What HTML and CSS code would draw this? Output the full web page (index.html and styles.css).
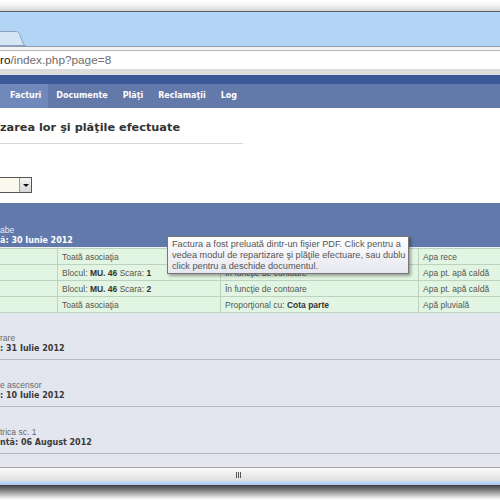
FILE: index.html
```html
<!DOCTYPE html>
<html>
<head>
<meta charset="utf-8">
<link rel="stylesheet" href="styles.css">
</head>
<body>
<div class="window">
  <div class="topshade"></div>
  <div class="titlebar">
    <svg class="tab" width="26" height="15" viewBox="0 0 26 15">
      <path d="M-2 0.5 H16.5 Q18.5 0.5 19.3 2.5 L23.5 13 Q24 14.5 25.5 14.5 L-2 14.5 Z" fill="#d6e5f4" stroke="#8da3bd" stroke-width="1"/>
    </svg>
  </div>
  <div class="addr-wrap">
    <div class="addr"><span class="host">ro</span>/index.php?page=8</div>
  </div>
  <div class="topbar"></div>
  <nav class="nav">
    <a class="navitem active">Facturi</a>
    <a class="navitem">Documente</a>
    <a class="navitem">Plăţi</a>
    <a class="navitem">Reclamaţii</a>
    <a class="navitem">Log</a>
  </nav>
  <main class="content">
    <div class="head"><h1 class="title">zarea lor şi plăţile efectuate</h1></div>
    <div class="selectrow">
      <div class="select"><span class="selbtn"><span class="arrow"></span></span></div>
    </div>
    <section class="invoice">
      <div class="band">
        <div class="band-lbl">abe</div>
        <div class="band-date">ă: 30 Iunie 2012</div>
      </div>
      <table class="split">
        <tr><td class="c1"></td><td class="c2">Toată asociaţia</td><td class="c3">În funcţie de contoare</td><td class="c4">Apa rece</td></tr>
        <tr><td class="c1"></td><td class="c2">Blocul: <b>MU. 46</b> Scara: <b>1</b></td><td class="c3">În funcţie de contoare</td><td class="c4">Apa pt. apă caldă</td></tr>
        <tr><td class="c1"></td><td class="c2">Blocul: <b>MU. 46</b> Scara: <b>2</b></td><td class="c3">În funcţie de contoare</td><td class="c4">Apa pt. apă caldă</td></tr>
        <tr><td class="c1"></td><td class="c2">Toată asociaţia</td><td class="c3">Proporţional cu: <b>Cota parte</b></td><td class="c4">Apă pluvială</td></tr>
      </table>
    </section>
    <div class="item"><div class="item-lbl">rare</div><div class="item-date">: 31 Iulie 2012</div></div>
    <div class="item"><div class="item-lbl">e ascensor</div><div class="item-date">: 10 Iulie 2012</div></div>
    <div class="item"><div class="item-lbl">trica sc. 1</div><div class="item-date">ntă: 06 August 2012</div></div>
    <div class="item"></div>
  </main>
  <div class="status"><span class="grip"></span></div>
  <div class="frame-bottom"></div>
  <div class="shadow"></div>
  <div class="tooltip">Factura a fost preluată dintr-un fişier PDF. Click pentru a<br>vedea modul de repartizare şi plăţile efectuare, sau dublu<br>click pentru a deschide documentul.</div>
</div>
</body>
</html>
```

FILE: styles.css
```css
html, body {
  margin: 0;
  padding: 0;
  width: 500px;
  height: 500px;
  overflow: hidden;
  background: #ffffff;
}

.window {
  position: relative;
  width: 500px;
  height: 500px;
  display: flex;
  flex-direction: column;
  font-family: "Liberation Sans", Arial, sans-serif;
}

.topshade {
  height: 11px;
  border-bottom: 1px solid #5c5f66;
  background: linear-gradient(#ffffff 0%, #f6f6f6 40%, #d4d4d4 100%);
}

.titlebar {
  height: 34px;
  background: #b2d5f6;
  display: flex;
  align-items: flex-end;
}

.tab {
  display: block;
}

.addr-wrap {
  border-top: 1px solid #8d9cb0;
  padding-top: 3px;
  background: #f3f3f3;
}

.addr {
  border-top: 1px solid #b4b4b4;
  height: 18px;
  line-height: 19px;
  background: #ffffff;
  font-size: 11.8px;
  color: #6d6d6d;
  border-bottom: 6px solid #dcdcdc;
  white-space: nowrap;
}

.host {
  color: #111111;
}

.topbar {
  height: 9px;
  background: #3b5999;
}

.nav {
  height: 24px;
  background: #6279aa;
  display: flex;
}

.navitem {
  font-family: "DejaVu Sans", Verdana, sans-serif;
  font-weight: bold;
  font-size: 8px;
  color: #ffffff;
  line-height: 24px;
  padding: 0 7px 0 8px;
  white-space: nowrap;
}

.navitem.active {
  padding-left: 10px;
  background: #7189ba;
}

.content {
  height: 359px;
  overflow: hidden;
  display: flex;
  flex-direction: column;
  background: #e3e6ee;
}

.head {
  background: #ffffff;
}

.title {
  margin: 0;
  width: 243px;
  padding: 13px 0 8px;
  line-height: 14px;
  font-family: "DejaVu Sans", Verdana, sans-serif;
  font-weight: bold;
  font-size: 11.3px;
  color: #333333;
  border-bottom: 1px solid #d8d8d8;
  white-space: nowrap;
}

.selectrow {
  background: #ffffff;
  padding: 33px 0 10px;
}

.select {
  width: 31px;
  height: 14px;
  border: 1px solid #555555;
  border-left: none;
  background: #fbf8ee;
  display: flex;
  justify-content: flex-end;
}

.selbtn {
  width: 11px;
  height: 14px;
  border-left: 1px solid #9a9a9a;
  background: linear-gradient(#f4f4f4, #d6d6d6);
  display: flex;
  align-items: center;
  justify-content: center;
}

.arrow {
  width: 0;
  height: 0;
  border-left: 3px solid transparent;
  border-right: 3px solid transparent;
  border-top: 3px solid #111111;
}

.invoice {
  background: #eef1f5;
}

.band {
  height: 44px;
  background: #6279ab;
  display: flex;
  flex-direction: column;
  justify-content: flex-end;
  padding-bottom: 1px;
  box-sizing: border-box;
}

.band-lbl {
  font-size: 8.5px;
  line-height: 10px;
  color: #e4e9f3;
  white-space: nowrap;
}

.band-date {
  font-family: "DejaVu Sans", Verdana, sans-serif;
  font-weight: bold;
  font-size: 8px;
  line-height: 11px;
  color: #ffffff;
  white-space: nowrap;
}

.split {
  margin-top: 1px;
  width: 500px;
  border-collapse: collapse;
  table-layout: fixed;
  font-size: 8.5px;
  color: #555555;
  background: #e2f5e2;
}

.split td {
  height: 15px;
  padding: 0 0 0 4px;
  border: 1px solid #bdd2bd;
  white-space: nowrap;
  overflow: hidden;
}

.split b {
  color: #333333;
}

.split .c1 { width: 53px; border-left: none; }
.split .c2 { width: 158px; }
.split .c3 { width: 193px; }
.split .c4 { border-right: none; }

.item {
  flex-shrink: 0;
  border-bottom: 1px solid #b6b8bd;
  padding-top: 20px;
  box-sizing: border-box;
  height: 47px;
}

.item-lbl {
  font-size: 8.5px;
  line-height: 10px;
  color: #6a6a6a;
  white-space: nowrap;
}

.item-date {
  font-family: "DejaVu Sans", Verdana, sans-serif;
  font-weight: bold;
  font-size: 8px;
  line-height: 11px;
  color: #3a3a3a;
  white-space: nowrap;
}

.status {
  height: 13px;
  border-top: 1px solid #a3a3a3;
  background: linear-gradient(#fbfbfb, #dedede);
  display: flex;
  align-items: center;
  padding-left: 236px;
}

.grip {
  width: 5px;
  height: 6px;
  background: repeating-linear-gradient(90deg, #555555 0, #555555 1px, transparent 1px, transparent 2px);
}

.frame-bottom {
  height: 4px;
  background: linear-gradient(#c8dcf4, #a8c6ec);
}

.shadow {
  height: 15px;
  background: linear-gradient(#3c3c3c 0%, #8a8a8a 40%, #e8e8e8 85%, #ffffff 100%);
}

.tooltip {
  position: absolute;
  left: 167px;
  top: 236px;
  width: 232px;
  height: 33px;
  padding: 2px 4px 1px;
  border: 1px solid #777777;
  background: linear-gradient(#ffffff, #e6e7f0);
  box-shadow: 2px 2px 3px rgba(0, 0, 0, 0.35);
  font-size: 9.2px;
  line-height: 11px;
  color: #555555;
  white-space: nowrap;
}
```
